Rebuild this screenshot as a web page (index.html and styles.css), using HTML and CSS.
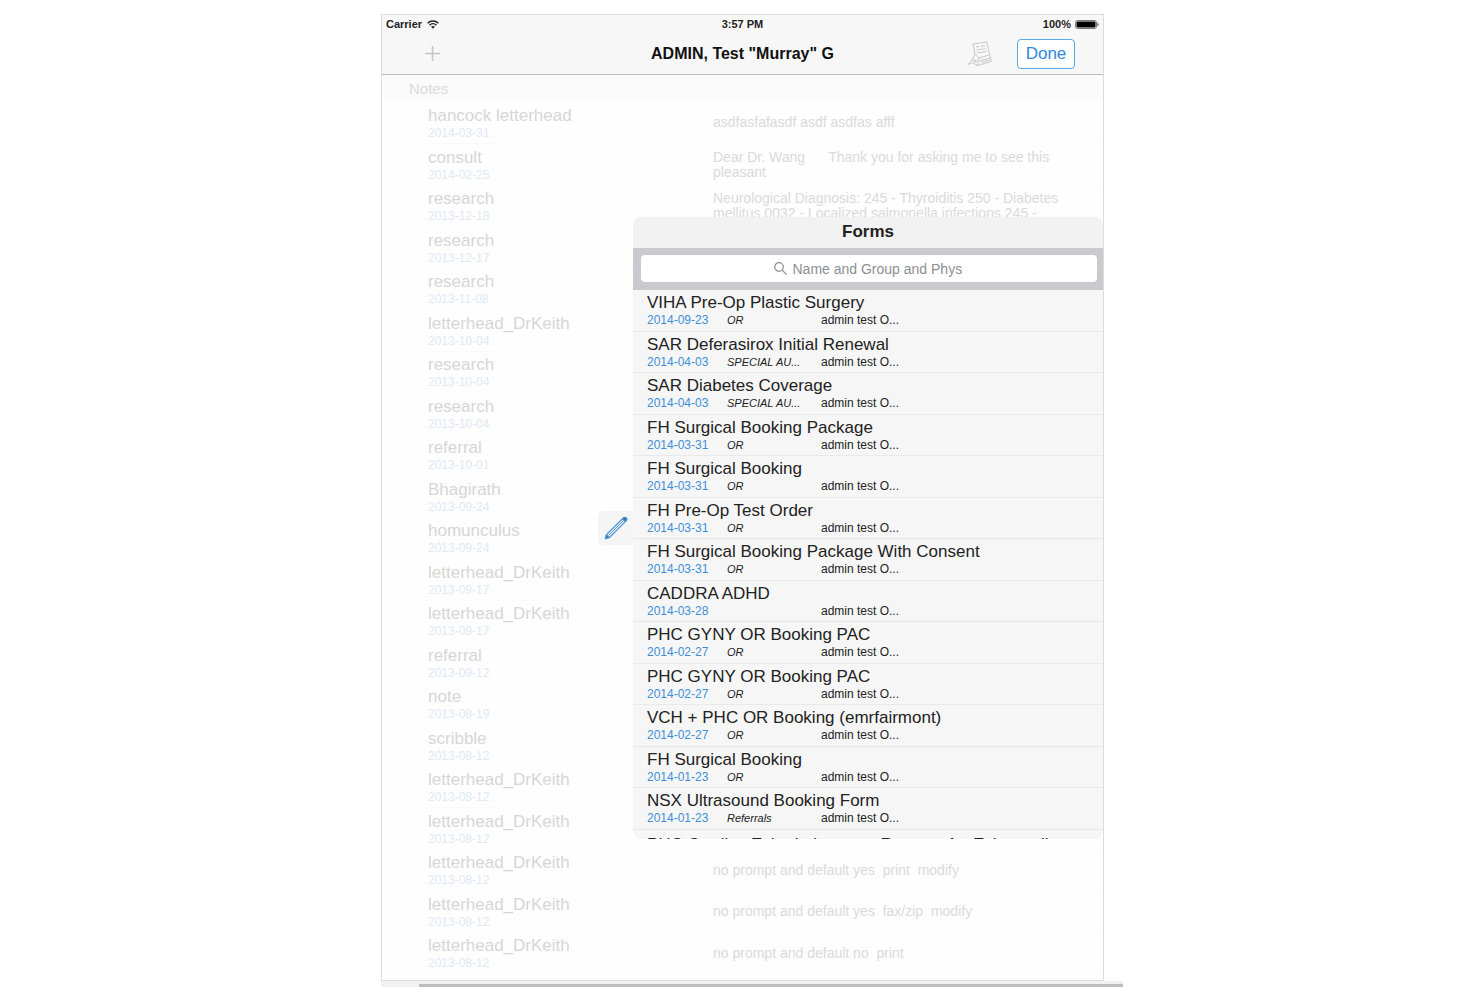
FILE: index.html
```html
<!DOCTYPE html>
<html lang="en">
<head>
  <meta charset="UTF-8" />
  <meta name="viewport" content="width=device-width, initial-scale=1.0"/>
  <title>Forms</title>
  <link rel="stylesheet" href="styles.css">
</head>
<body>
  <div class="wrap">
    <main class="tablet">
      <div class="status-bar">
        <span class="carrier">Carrier
          <svg width="12" height="9" viewBox="0 0 12 9" fill="none" stroke="#222" stroke-width="1.5">
            <path d="M.6 3.2C3.600.3 8.400.3 11.400 3.200"/>
            <path d="M2.500 5.200C4.500 3.300 7.500 3.300 9.500 5.200"/>
            <path d="M4 6.600L6 8.800L8 6.600C7 5.700 5 5.700 4 6.600Z" fill="#222" stroke="none"/>
          </svg>
        </span>
        <span class="clock">3:57 PM</span>
        <span class="battery">100%
          <svg width="24" height="9" viewBox="0 0 24 9">
            <rect x=".5" y=".5" width="21" height="8" rx="2" fill="none" stroke="#777"/>
            <rect x="1.500" y="1.500" width="19" height="6" rx="1" fill="#000"/>
            <path d="M22.500 2.500Q24.500 4.500 22.500 6.500Z" fill="#333"/>
          </svg>
        </span>
      </div>

      <header class="nav-bar">
        <button class="add" aria-label="Add">
          <svg width="15" height="15" viewBox="0 0 15 15" stroke="#c4c4c4" stroke-width="1.500"><path d="M7.500 0V15M0 7.500H15"/></svg>
        </button>
        <h1>ADMIN, Test "Murray" G</h1>
        <div class="actions">
          <button class="fax" aria-label="Documents">
            <svg width="26" height="26" viewBox="0 0 26 26" fill="none" stroke="#c8c8c8">
              <path d="M6 3L20 1L21.500 9L24.500 20.500L10 24.500L6 21.500L1 23.500L5 19L8 13Z"/>
              <path d="M9 6L12 5.500M14 5.200L18 4.600M9.500 9L18.500 7.700M10 12L19.500 10.500"/>
              <path d="M8 13L12 17L10 20L6 21.500M5 19L9 19.500M12 17L22 14M12 20L23.500 17M10 24.500L12 20M14 21.500L23 19"/>
            </svg>
          </button>
          <button class="done">Done</button>
        </div>
      </header>

      <h2 class="section-title">Notes</h2>
      <ul class="notes" id="notes"></ul>

      <button class="pen-tab" aria-label="Edit">
        <svg width="24" height="24" viewBox="0 0 24 24" fill="none" stroke="#4a94d4">
          <path d="M1.500 22.500L2.500 18.500L19.500 1.800Q21 .8 22.300 2Q23.300 3.300 22.300 4.600L5.500 21.500Z" stroke-width="1.300"/>
          <path d="M4.500 19.500L19.500 4.500"/>
          <path d="M1.500 22.500L2.500 18.500L5.500 21.500ZM18.500 3L19.800 1.800Q21 .8 22.300 2Q23.300 3.300 22.300 4.600L21.200 5.700Z" fill="#2f78b8"/>
        </svg>
      </button>

      <section class="popover">
        <h2>Forms</h2>
        <div class="search">
          <label class="search-box">
            <svg width="13" height="13" viewBox="0 0 13 13" fill="none" stroke="#8e8e93" stroke-width="1.200">
              <circle cx="5" cy="5" r="4.300"/>
              <path d="M8.200 8.200L12.500 12.500"/>
            </svg>
            <input type="text" placeholder="Name and Group and Phys" aria-label="Search forms">
          </label>
        </div>
        <ul class="forms" id="forms"></ul>
      </section>
    </main>
    <div class="scroll-track"><div class="scroll-thumb"></div></div>
  </div>

  <script>
    const notes = [
      ['hancock letterhead', '2014-03-31', 'asdfasfafasdf asdf asdfas afff'],
      ['consult', '2014-02-25', 'Dear Dr. Wang      Thank you for asking me to see this pleasant'],
      ['research', '2013-12-18', 'Neurological Diagnosis: 245 - Thyroiditis 250 - Diabetes mellitus 0032 - Localized salmonella infections 245 -'],
      ['research', '2013-12-17', ''],
      ['research', '2013-11-08', ''],
      ['letterhead_DrKeith', '2013-10-04', ''],
      ['research', '2013-10-04', ''],
      ['research', '2013-10-04', ''],
      ['referral', '2013-10-01', ''],
      ['Bhagirath', '2013-09-24', ''],
      ['homunculus', '2013-09-24', ''],
      ['letterhead_DrKeith', '2013-09-17', ''],
      ['letterhead_DrKeith', '2013-09-17', ''],
      ['referral', '2013-09-12', ''],
      ['note', '2013-08-19', ''],
      ['scribble', '2013-08-12', ''],
      ['letterhead_DrKeith', '2013-08-12', ''],
      ['letterhead_DrKeith', '2013-08-12', ''],
      ['letterhead_DrKeith', '2013-08-12', 'no prompt and default yes  print  modify'],
      ['letterhead_DrKeith', '2013-08-12', 'no prompt and default yes  fax/zip  modify'],
      ['letterhead_DrKeith', '2013-08-12', 'no prompt and default no  print']
    ];

    const forms = [
      ['VIHA Pre-Op Plastic Surgery', '2014-09-23', 'OR'],
      ['SAR Deferasirox Initial Renewal', '2014-04-03', 'SPECIAL AU...'],
      ['SAR Diabetes Coverage', '2014-04-03', 'SPECIAL AU...'],
      ['FH Surgical Booking Package', '2014-03-31', 'OR'],
      ['FH Surgical Booking', '2014-03-31', 'OR'],
      ['FH Pre-Op Test Order', '2014-03-31', 'OR'],
      ['FH Surgical Booking Package With Consent', '2014-03-31', 'OR'],
      ['CADDRA ADHD', '2014-03-28', ''],
      ['PHC GYNY OR Booking PAC', '2014-02-27', 'OR'],
      ['PHC GYNY OR Booking PAC', '2014-02-27', 'OR'],
      ['VCH + PHC OR Booking (emrfairmont)', '2014-02-27', 'OR'],
      ['FH Surgical Booking', '2014-01-23', 'OR'],
      ['NSX Ultrasound Booking Form', '2014-01-23', 'Referrals'],
      ['PHC Cardiac Echo Laboratory Request for Echocardiogram', '', '']
    ];

    document.getElementById('notes').innerHTML = notes.map(([title, date, text]) => `
      <li>
        <div class="note-head"><h3>${title}</h3><time>${date}</time></div>
        <p>${text}</p>
      </li>`).join('');

    document.getElementById('forms').innerHTML = forms.map(([title, date, group]) => `
      <li>
        <h3>${title}</h3>
        ${date ? `<div class="meta"><time>${date}</time><em>${group}</em><span>admin test O...</span></div>` : ''}
      </li>`).join('');
  </script>
</body>
</html>
```
FILE: styles.css
```css
* {
  box-sizing: border-box;
}

body {
  margin: 0;
  padding: 14px 0 0 5px;
  font-family: "Liberation Sans", Arial, sans-serif;
  background: #fff;
  color: #222;
  overflow: hidden;
}

h1, h2, h3, p, ul {
  margin: 0;
  padding: 0;
}

ul {
  list-style: none;
}

button {
  padding: 0;
  border: none;
  background: none;
  font-family: inherit;
  cursor: pointer;
}

svg {
  display: block;
}

.wrap {
  max-width: 723px;
  margin: 0 auto;
}

.tablet {
  position: relative;
  padding-bottom: 5px;
  border: 1px solid #dcdcdc;
  background: #fefefe;
}

/* top bars */
.status-bar {
  display: grid;
  grid-template-columns: 1fr auto 1fr;
  align-items: center;
  height: 18px;
  padding: 0 4px;
  background: #f7f7f7;
  font-size: 11px;
  font-weight: bold;
}

.carrier, .battery {
  display: flex;
  align-items: center;
  gap: 5px;
}

.battery {
  justify-content: flex-end;
  gap: 4px;
}

.nav-bar {
  display: grid;
  grid-template-columns: 1fr auto 1fr;
  align-items: center;
  height: 42px;
  padding: 0 28px;
  border-bottom: 1px solid #bdbdbd;
  background: #f7f7f7;
}

.nav-bar h1 {
  font-size: 16px;
  color: #111;
}

.add {
  width: 15px;
  margin-left: 15px;
}

.actions {
  display: flex;
  align-items: center;
  justify-content: flex-end;
  gap: 24px;
}

.done {
  width: 58px;
  height: 30px;
  border: 1px solid #5aa9e6;
  border-radius: 4px;
  background: #fff;
  color: #2f86e0;
  font-size: 17px;
}

/* faded notes list */
.section-title {
  padding-left: 27px;
  background: #fbfbfb;
  color: #dadada;
  font-size: 15px;
  font-weight: normal;
  line-height: 27px;
}

.notes li {
  display: flex;
  align-items: center;
  height: 42px;
  padding-left: 46px;
  border-bottom: 1px solid #fafafa;
}

.notes {
  padding-bottom: 1px;
}

.notes li:nth-child(odd),
.forms li:nth-child(even) {
  height: 41px;
}

.notes li:first-child {
  height: 42px;
}

.note-head {
  width: 285px;
}

h3 {
  font-size: 17px;
  font-weight: normal;
  line-height: 20px;
  white-space: nowrap;
}

time {
  display: block;
  font-size: 12px;
  line-height: 14px;
}

.notes h3 {
  color: #d6d6d6;
}

.notes time {
  color: #dfe9f4;
}

.notes p {
  width: 350px;
  color: #dadada;
  font-size: 14px;
  line-height: 15px;
  white-space: pre-wrap;
}

/* forms popover */
.pen-tab {
  position: absolute;
  top: 496px;
  right: 470px;
  display: flex;
  align-items: center;
  justify-content: center;
  width: 35px;
  height: 34px;
  border-radius: 5px 0 0 5px;
  background: #f5f5f5;
}

.popover {
  position: absolute;
  top: 202px;
  right: 0;
  width: 470px;
  height: 622px;
  overflow: hidden;
  border-radius: 8px;
  background: #f6f6f6;
}

.popover h2 {
  padding-bottom: 2px;
  background: #f2f2f2;
  font-size: 17px;
  line-height: 29px;
  text-align: center;
}

.search {
  padding: 7px 6px 8px 8px;
  background: #c9c9ce;
}

.search-box {
  display: flex;
  align-items: center;
  justify-content: center;
  gap: 6px;
  height: 27px;
  border-radius: 4px;
  background: #fff;
}

.search-box input {
  width: 172px;
  padding: 0;
  border: none;
  outline: none;
  background: none;
  font-family: inherit;
  font-size: 14px;
}

.search-box input::placeholder {
  color: #8e8e93;
}

.forms li {
  height: 42px;
  padding: 3px 14px 0;
  border-bottom: 1px solid #e9e9e9;
}

.forms li:last-child {
  padding-top: 5px;
}

.forms h3 {
  overflow: hidden;
  text-overflow: ellipsis;
}

.meta {
  display: grid;
  grid-template-columns: 80px 94px 1fr;
  font-size: 12px;
  line-height: 14px;
}

.forms time {
  color: #3d8fd6;
}

.meta em {
  font-size: 11px;
}

/* page scrollbar */
.scroll-track {
  height: 7px;
  margin-right: -19px;
  padding: 3px 0 0 38px;
  background: #f1f1f1;
}

.scroll-thumb {
  height: 4px;
  background: #bdbdbd;
}
```
